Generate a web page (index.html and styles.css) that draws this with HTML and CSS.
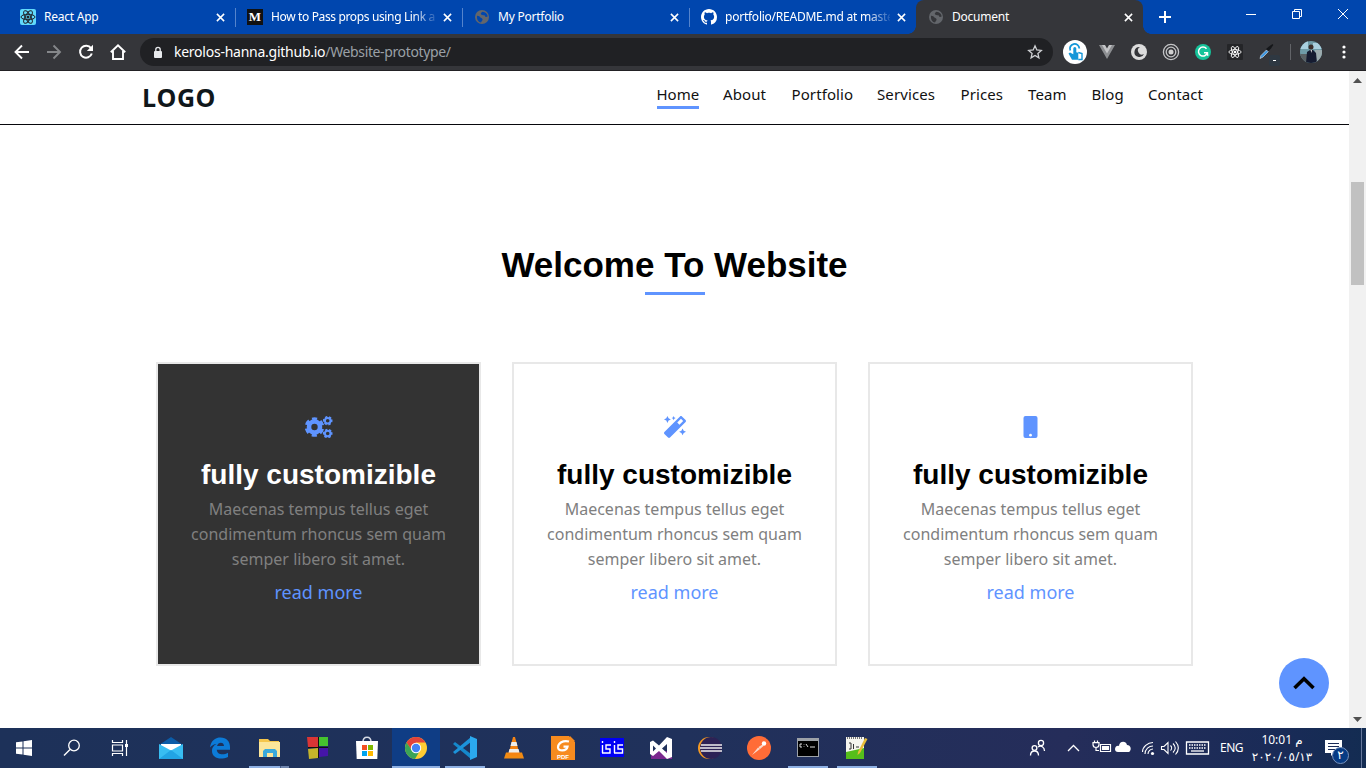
FILE: index.html
```html
<!DOCTYPE html>
<html lang="en">
<head>
<meta charset="utf-8">
<title>Document</title>
<link rel="stylesheet" href="styles.css">
</head>
<body>
<svg class="defs" width="0" height="0">
  <defs>
    <symbol id="close" viewBox="0 0 10 10"><path d="M1 1l8 8M9 1l-8 8" stroke="#fff" stroke-width="1.7"/></symbol>
    <symbol id="globe" viewBox="0 0 14 14"><circle cx="7" cy="7" r="7" fill="#63666b"/><path d="M2 5.500c1 1 2 0 3 1.500s2 .8 2.500 2-1 2.200-1.500 3.500C3.500 12.300 1.500 9.500 2 5.500zM7.500 1.800c-1.500 1-2.500 2-1 3s3-.3 3.500 1.200 1.500 1 2.700.6C12.500 4 10.500 2 7.500 1.800z" fill="var(--land)"/></symbol>
    <symbol id="atom" viewBox="0 0 16 16"><g fill="none" stroke="currentColor"><ellipse cx="8" cy="8" rx="7" ry="2.700"/><ellipse cx="8" cy="8" rx="7" ry="2.700" transform="rotate(60 8 8)"/><ellipse cx="8" cy="8" rx="7" ry="2.700" transform="rotate(120 8 8)"/></g><circle cx="8" cy="8" r="1.500" fill="currentColor"/></symbol>
  </defs>
</svg>
<div class="screen">
  <div class="tabs">
    <div class="tab"><svg class="fav react" viewBox="0 0 16 16"><rect width="16" height="16" rx="2" fill="#61dafb"/><use href="#atom"/></svg><span class="tab-title">React App</span><svg class="x"><use href="#close"/></svg></div>
    <div class="tab line"><span class="fav medium">M</span><span class="tab-title fade tight">How to Pass props using Link a</span><svg class="x"><use href="#close"/></svg></div>
    <div class="tab line"><svg class="fav globe"><use href="#globe"/></svg><span class="tab-title">My Portfolio</span><svg class="x"><use href="#close"/></svg></div>
    <div class="tab line"><svg class="fav" viewBox="0 0 16 16"><path fill="#fff" d="M8 0C3.580 0 0 3.580 0 8c0 3.540 2.290 6.530 5.470 7.590.4.070.55-.17.55-.38 0-.19-.01-.82-.01-1.490-2.010.37-2.530-.49-2.690-.94-.09-.23-.48-.94-.82-1.130-.28-.15-.68-.52-.01-.53.63-.01 1.080.58 1.230.82.72 1.210 1.870.87 2.330.66.07-.52.28-.87.51-1.070-1.780-.2-3.640-.89-3.640-3.950 0-.87.31-1.590.82-2.150-.08-.2-.36-1.020.08-2.120 0 0 .67-.21 2.200.82.64-.18 1.320-.27 2-.27.68 0 1.360.09 2 .27 1.530-1.040 2.200-.82 2.200-.82.44 1.100.16 1.920.08 2.120.51.56.82 1.270.82 2.150 0 3.070-1.870 3.750-3.650 3.950.29.25.54.73.54 1.480 0 1.070-.01 1.930-.01 2.200 0 .21.15.46.55.38A8.013 8.013 0 0016 8c0-4.420-3.580-8-8-8z"/></svg><span class="tab-title fade">portfolio/README.md at maste</span><svg class="x"><use href="#close"/></svg></div>
    <div class="tab active"><svg class="fav globe dark"><use href="#globe"/></svg><span class="tab-title">Document</span><svg class="x"><use href="#close"/></svg></div>
    <svg class="plus" viewBox="0 0 12 12"><path d="M6 0v12M0 6h12" stroke="#fff" stroke-width="2"/></svg>
    <div class="winctl">
      <svg viewBox="0 0 46 28"><path d="M18 14.500h10" stroke="#fff"/></svg>
      <svg viewBox="0 0 46 28"><path d="M18.500 11.500h7v7h-7zM20.500 11.500v-2h7v7h-2" stroke="#fff" fill="none"/></svg>
      <svg viewBox="0 0 46 28"><path d="M18 9l10 10M28 9l-10 10" stroke="#fff"/></svg>
    </div>
  </div>

  <div class="toolbar">
    <svg class="tool" viewBox="0 0 32 32"><path d="M23 16H9.500M16 9.500L9.500 16l6.500 6.500" fill="none" stroke="#fff" stroke-width="1.900"/></svg>
    <svg class="tool" viewBox="0 0 32 32"><path d="M9 16h13M15.500 9.500L22 16l-6.500 6.500" fill="none" stroke="#85878a" stroke-width="1.900"/></svg>
    <svg class="tool" viewBox="0 0 32 32"><path d="M21 12.200A6 6 0 1 0 21.800 17.500" fill="none" stroke="#fff" stroke-width="2"/><path d="M23 8.800v6.200h-6.200z" fill="#fff"/></svg>
    <svg class="tool" viewBox="0 0 32 32"><path d="M8.800 16.200L16 9.200l7.200 7M11 15v8h10v-8" fill="none" stroke="#fff" stroke-width="1.900"/></svg>
    <div class="omnibox">
      <svg class="lock" viewBox="0 0 10 12"><rect x="1" y="4.500" width="8" height="7" rx="1" fill="#e8eaed"/><path d="M2.800 5V3a2.200 2.200 0 0 1 4.400 0v2" fill="none" stroke="#e8eaed" stroke-width="1.300"/></svg>
      <span class="url"><b>kerolos-hanna.github.io</b>/Website-prototype/</span>
      <svg class="star" viewBox="0 0 16 16"><path d="M8 1.800l1.800 4.200 4.500.4-3.400 3 1 4.500L8 11.500l-3.900 2.400 1-4.500-3.400-3 4.500-.4z" fill="none" stroke="#cfd1d4" stroke-width="1.300"/></svg>
    </div>
    <svg class="tool" viewBox="0 0 32 32"><circle cx="16" cy="16" r="12" fill="#fff"/><path d="M11.300 14.500a4.700 4.700 0 1 1 9-2" fill="none" stroke="#1496d8" stroke-width="1.800"/><path d="M14.300 12.500a1.500 1.500 0 0 1 3 0v3.800l2 .4v7h-6.300l-3.500-6.200 1.500-1 3.300 1.700z" fill="#1496d8"/><path d="M19.300 16.500l3.700 1v6h-3.700" fill="none" stroke="#1496d8" stroke-width="1.400"/></svg>
    <svg class="tool" viewBox="0 0 32 32"><path d="M8 9h5l3 5 3-5h5l-8 14z" fill="#8c8e91"/><path d="M11 9h3l2 3.500L18 9h3l-5 8.500z" fill="#c4c5c7"/></svg>
    <svg class="tool" viewBox="0 0 32 32"><circle cx="16" cy="16" r="8" fill="#dcdcdc"/><path d="M17 11a5 5 0 1 0 4 7 3.500 3.500 0 1 1-4-7z" fill="#35363a"/></svg>
    <svg class="tool" viewBox="0 0 32 32"><g fill="none" stroke="#c4c5c7" stroke-width="1.300"><circle cx="16" cy="16" r="7.600"/><circle cx="16" cy="16" r="4.800"/></g><circle cx="16" cy="16" r="2.500" fill="#d0d0d0"/></svg>
    <svg class="tool" viewBox="0 0 32 32"><circle cx="16" cy="16" r="8" fill="#15c39a"/><path d="M19.500 12.800a4.500 4.500 0 1 0 .8 4H17m3.400 0l.3 3" fill="none" stroke="#fff" stroke-width="1.500"/></svg>
    <svg class="tool" viewBox="0 0 32 32"><rect x="8" y="8" width="16" height="16" rx="1" fill="#242528"/><use href="#atom" x="9" y="9" width="14" height="14" color="#fff"/></svg>
    <svg class="tool" viewBox="0 0 32 32"><path d="M9 22.500l1-3 5.500-5.500 1.700 1.700L12 21z" fill="#3b97e3" stroke="#ccd9e5" stroke-width=".7"/><path d="M15 13l3-2.500 3.500-2.500.8 1-2.300 3.500-2.500 2.500z" fill="#15171a"/><rect x="18" y="19" width="11" height="11" rx="2" fill="#2e3842"/><path d="M22 24.500h3" stroke="#fff"/></svg>
    <span class="sep"></span>
    <svg class="avatar" viewBox="0 0 22 22"><clipPath id="round"><circle cx="11" cy="11" r="11"/></clipPath><g clip-path="url(#round)"><path d="M0 0h22v22H0z" fill="#6f9ca8"/><path d="M0 0h8v8H0zM13 2h9v6h-9z" fill="#a9d0df"/><path d="M0 13h7v9H0z" fill="#596164"/><path d="M15 9h7v13h-7z" fill="#9cabae"/><path d="M6 22l1-11 3-2h3l3 3 1 10z" fill="#151b30"/><circle cx="11" cy="6" r="2.500" fill="#3b2e2b"/><path d="M10.500 9h1.500l-.5 3z" fill="#ddd"/></g></svg>
    <svg class="dots" viewBox="0 0 4 14"><g fill="#fff"><circle cx="2" cy="2" r="1.600"/><circle cx="2" cy="7" r="1.600"/><circle cx="2" cy="12" r="1.600"/></g></svg>
  </div>

  <div class="viewport">
    <div class="site">
      <header class="header">
        <div class="logo">LOGO</div>
        <nav class="nav"><a class="current">Home</a><a>About</a><a>Portfolio</a><a>Services</a><a>Prices</a><a>Team</a><a>Blog</a><a>Contact</a></nav>
      </header>
      <main class="main">
        <h1 class="title">Welcome To Website</h1>
        <div class="rule"></div>
        <div class="cards">
          <article class="card inverse">
            <svg class="icon cogs" viewBox="0 0 28 22"><g fill="none" stroke="#5f94ff"><circle cx="9.500" cy="11" r="5.500" stroke-width="4.600"/><circle cx="9.500" cy="11" r="8.300" stroke-width="2.900" stroke-dasharray="5 3.691" transform="rotate(-107 9.500 11)"/><g stroke-width="2"><circle cx="22.700" cy="4.700" r="2.800"/><circle cx="22.700" cy="17.500" r="2.800"/></g><g stroke-width="1.600" stroke-dasharray="2.500 1.688"><circle cx="22.700" cy="4.700" r="4" transform="rotate(-18 22.700 4.700)"/><circle cx="22.700" cy="17.500" r="4" transform="rotate(-18 22.700 17.500)"/></g></g></svg>
            <h2>fully customizible</h2>
            <p>Maecenas tempus tellus eget<br>condimentum rhoncus sem quam<br>semper libero sit amet.</p>
            <a>read more</a>
          </article>
          <article class="card">
            <svg class="icon wand" viewBox="0 0 512 512"><path fill="#5f94ff" d="M224 96l16-32 32-16-32-16-16-32-16 32-32 16 32 16 16 32zM80 160l26.660-53.330L160 80l-53.340-26.670L80 0 53.340 53.330 0 80l53.340 26.670L80 160zm352 128l-26.660 53.330L352 368l53.340 26.670L432 448l26.660-53.330L512 368l-53.340-26.670L432 288zm70.620-193.770L417.770 9.380C411.530 3.120 403.340 0 395.150 0c-8.190 0-16.380 3.120-22.630 9.380L9.380 372.520c-12.500 12.500-12.500 32.760 0 45.250l84.850 84.850c6.250 6.250 14.440 9.370 22.620 9.370 8.190 0 16.380-3.120 22.630-9.370l363.140-363.150c12.500-12.480 12.500-32.750 0-45.240zM359.450 203.460l-50.910-50.910 86.600-86.600 50.910 50.910-86.600 86.600z"/></svg>
            <h2>fully customizible</h2>
            <p>Maecenas tempus tellus eget<br>condimentum rhoncus sem quam<br>semper libero sit amet.</p>
            <a>read more</a>
          </article>
          <article class="card">
            <svg class="icon phone" viewBox="0 0 14 22"><rect width="14" height="22" rx="2" fill="#5f94ff"/><circle cx="7" cy="19.200" r="1.400" fill="#fff"/></svg>
            <h2>fully customizible</h2>
            <p>Maecenas tempus tellus eget<br>condimentum rhoncus sem quam<br>semper libero sit amet.</p>
            <a>read more</a>
          </article>
        </div>
      </main>
      <div class="to-top"><svg width="22" height="14" viewBox="0 0 22 14"><path d="M1.500 12L11 2.800l9.500 9.200" fill="none" stroke="#000" stroke-width="3.600"/></svg></div>
    </div>
    <div class="scrollbar"><svg width="9" height="5"><path d="M0 5l4.500-5L9 5z" fill="#505050"/></svg><div class="thumb"></div><svg width="9" height="5"><path d="M0 0l4.500 5L9 0z" fill="#505050"/></svg></div>
  </div>

  <div class="taskbar">
    <div class="system">
      <svg viewBox="0 0 48 40"><path d="M16 14.300l6.500-.9V19.500H16zM23.500 13.200L32 12v7.500h-8.500zM16 20.500h6.500v6.100l-6.500-.9zM23.500 20.500H32V28l-8.500-1.200z" fill="#fff"/></svg>
      <svg viewBox="0 0 48 40"><circle cx="26" cy="17.500" r="5.300" fill="none" stroke="#fff" stroke-width="1.300"/><path d="M22 21.500L16 27.500" stroke="#fff" stroke-width="1.400"/></svg>
      <svg viewBox="0 0 48 40"><path d="M16.500 12v2.500h10V12M16.500 28v-2.500h10V28M16.500 17h10v6h-10zM30.500 12v16" fill="none" stroke="#fff" stroke-width="1.200"/><path d="M29 16h3v3h-3z" fill="#fff"/></svg>
    </div>
    <div class="apps">
      <div class="app"><svg viewBox="0 0 24 24"><path d="M0 9l12-8 12 8z" fill="#0b5ca8"/><path d="M2 8h20v9H2z" fill="#fff"/><path d="M0 8l12 6.500L24 8v15H0z" fill="#38bdf2"/><path d="M0 23h24L12 14z" fill="#22a4e4"/></svg></div>
      <div class="app"><svg viewBox="0 0 24 24"><path d="M2 11.500C3 4 8 1.500 12.500 1.500c6 0 9.500 4 9.500 9.500v2.800H8.800c.2 5 6.500 5.700 11.200 3v4.200C12 24.500 4 22 4 15c0-4 2.500-6 4.500-7C6 8 4 9.500 2 11.500zM9 10h7c0-4.500-6-4.500-7 0z" fill="#0c7bd8" fill-rule="evenodd"/></svg></div>
      <div class="app open stack"><svg viewBox="0 0 24 24"><path d="M2 3h9l2 2h9v16H2z" fill="#f5c64b"/><path d="M2 6h21v15H2z" fill="#fce69a"/><path d="M6 21v-6l2-2h10l2 2v6h-4v-4h-6v4z" fill="#38a9dc"/></svg></div>
      <div class="app"><svg viewBox="0 0 24 24"><path d="M1 1l11 0v10H2z" fill="#d93535"/><path d="M13 1h9v9h-9z" fill="#45c32e"/><path d="M2 13l10-1v10l-9 1z" fill="#c5b42b"/><path d="M13 12l9-1v9l-9 1z" fill="#4515a8"/><path d="M12.500 1v21M2 11.500h20" stroke="#111"/></svg></div>
      <div class="app"><svg viewBox="0 0 24 24"><path d="M8 6c0-6.500 8-6.500 8 0" fill="none" stroke="#d7dbe5" stroke-width="1.500"/><path d="M1 5h22l-.7 18H1.700z" fill="#fff"/><path d="M7 9h5v5H7z" fill="#f25022"/><path d="M13 9h5v5h-5z" fill="#7fba00"/><path d="M7 15h5v5H7z" fill="#00a4ef"/><path d="M13 15h5v5h-5z" fill="#ffb900"/></svg></div>
      <div class="app open focused"><svg viewBox="0 0 24 24"><circle cx="12" cy="12" r="11" fill="#fc3"/><path d="M2.500 6.500A11 11 0 0 1 21.500 6.500H12L8 15z" fill="#e2433a"/><path d="M2.500 6.500A11 11 0 0 0 11 23l5-8.500H8z" fill="#3ba457"/><circle cx="12" cy="12" r="5.200" fill="#fff"/><circle cx="12" cy="12" r="4.200" fill="#4383f4"/></svg></div>
      <div class="app open"><svg viewBox="0 0 24 24"><path d="M0 8l2-2 16 12v5z" fill="#1588cb"/><path d="M0 16l2 2L18 6V1z" fill="#1c93da"/><path d="M17 0l7 3v18l-7 3z" fill="#2ba9ef"/></svg></div>
      <div class="app"><svg viewBox="0 0 24 24"><path d="M4 16.500h16l2 6H2z" fill="#f28b13"/><path d="M11 1h2l4.500 17c-2 2-9 2-11 0z" fill="#f58414"/><path d="M9.500 6h5l1 4h-7zM7.500 13h9l1 3.500h-11z" fill="#f0eeeb"/></svg></div>
      <div class="app"><svg viewBox="0 0 24 24"><path d="M0 0h18l6 6v18H0z" fill="#f78b1f"/><path d="M19 0v5h5z" fill="#f78b1f"/><path d="M18 5.500C12 4 7 7 7 11.500c0 4 8.500 4 9.500-.8h-4" fill="none" stroke="#fff" stroke-width="2.200"/><text x="12" y="22.500" class="pdf">PDF</text></svg></div>
      <div class="app"><svg viewBox="0 0 24 24"><path d="M0 2h24v19H0z" fill="#0000f5"/><path d="M2.500 9v8M11 9H6v4h4v4H2M14.500 9v8M23 9h-5v4h4.500v4H14M2.500 5v2M14.500 5v2" fill="none" stroke="#fff" stroke-width="1.400"/></svg></div>
      <div class="app"><svg viewBox="0 0 24 24"><path d="M2 15h21v8H2z" fill="#7a288f"/><path d="M1 6l3-1.500 6 5L18 1l5 2v18l-5 2-8-8-6 5-3-2zM4 9.500v6l3-3zM18 8l-5 4.500 5 4.500z" fill="#fff" fill-rule="evenodd"/></svg></div>
      <div class="app"><svg viewBox="0 0 24 24"><circle cx="11" cy="12" r="11" fill="#f59a23"/><circle cx="13" cy="12" r="11" fill="#2c2255"/><path d="M3 9h21M2 12h22M3 15h21" stroke="#eee" stroke-width="1.700"/></svg></div>
      <div class="app"><svg viewBox="0 0 24 24"><circle cx="12" cy="12" r="12" fill="#ff6c37"/><path d="M5 19l6-7.500 2 1.500zM11.500 11l4-2.500 1 1.500-3.500 3z" fill="#fbd8c9"/><circle cx="17" cy="7.500" r="2.200" fill="#fff"/></svg></div>
      <div class="app open"><svg viewBox="0 0 24 24"><path d="M1 2h22v19H1z" fill="#9da2a8"/><path d="M2 5h20v15H2z" fill="#000"/><path d="M6 8H4v3h2M8 8.500v.5M8 10.500v.5M10 8l2 3M14 11h5" fill="none" stroke="#ddd"/></svg></div>
      <div class="app open"><svg viewBox="0 0 24 24"><path d="M1 1h18v22H1z" fill="#f5f5ef"/><path d="M1 16l18-4v11H1z" fill="#56be1b"/><path d="M2 2h16" stroke="#777" stroke-width="2" stroke-dasharray="1 1"/><path d="M4 7h2v6H4M8.500 8v5M11 11h3" fill="none" stroke="#333"/><path d="M13 16L20 2l2.500 1L15 17l-2.500 2z" fill="#e8bd37"/></svg></div>
    </div>
    <svg class="tray" viewBox="0 0 190 40">
      <g fill="none" stroke="#fff" stroke-width="1.300">
        <circle cx="11.500" cy="20" r="2.400"/><path d="M7.500 27.500c0-6 8-6 8 0"/><circle cx="18" cy="15" r="2.600"/><path d="M15 19c3-2 6.500 0 6.500 4"/>
        <path d="M46 23l5.500-5.500L57 23" transform="translate(-1 0)"/>
        <path d="M77.500 16.500h10v7h-10z" stroke-width="1.200"/><path d="M71.500 12.500v2M74.500 12.500v2M70 14.700h6v1.800a3 3 0 0 1-6 0zM73 19.500v3h3" stroke-width="1.200"/>
        <path d="M119.500 24c0-5 5-9.500 10.500-9.500M122 26c0-5 4-8 8-8M125 26c0-3 2.500-5 5-5" stroke-width="1.100"/>
        <path d="M138.500 18.500h2.500l4-4v11l-4-4h-2.500zM147.500 17.500c1.500 1.500 1.500 3.500 0 5M150 15.500c3 3 3 6 0 9M152.500 13.500c3.500 4 3.500 9 0 13" stroke-width="1.100"/>
        <path d="M163.500 14h22v12h-22z"/><path d="M166 17h17M166 20h17" stroke-dasharray="1.500 1"/><path d="M168 23h13"/>
      </g>
      <path d="M79 18h7v4h-7z" fill="#fff"/><circle cx="129.500" cy="25.500" r="1.600" fill="#fff"/><path d="M92 21c0-3 3-4 4-3 0-5 7-6 8-1 4 0 5 5 2 7H95c-2 0-3-1-3-3z" fill="#fff"/>
    </svg>
    <span class="lang">ENG</span>
    <div class="clock"><span>10:01 م</span><span class="date">٢٠٢٠/٠٥/١٣</span></div>
    <div class="notes"><svg width="17" height="17" viewBox="0 0 17 17"><path d="M0 0h17v13H9l-3 3v-3H0z" fill="#fff"/><path d="M3 3.500h11M3 6.500h11M3 9.500h7" stroke="#1b2b57"/></svg><span class="badge">٢</span></div>
    <span class="desktop-edge"></span>
  </div>
</div>
</body>
</html>
```
FILE: styles.css
```css
* { box-sizing: border-box; }
body { margin: 0; font-family: "Noto Sans", sans-serif; }
svg { display: block; flex: none; }
.defs { position: absolute; }
.screen { width: 1366px; height: 768px; overflow: hidden; display: flex; flex-direction: column; }

.tabs { height: 34px; background: #0046ae; display: flex; padding-left: 8px; color: #fff; }
.tab { width: 227px; height: 34px; display: flex; align-items: center; padding: 0 10px 0 12px; font-size: 12px; flex: none; position: relative; }
.tab.line { background: linear-gradient(#5584cc, #5584cc) 0 8px / 1px 19px no-repeat; }
.tab.active { background: #35363a; border-radius: 8px 8px 0 0; }
.tab.active::before, .tab.active::after { content: ""; position: absolute; bottom: 0; width: 8px; height: 8px; }
.tab.active::before { left: -8px; background: radial-gradient(circle at 0 0, transparent 7.5px, #35363a 8px); }
.tab.active::after { right: -8px; background: radial-gradient(circle at 100% 0, transparent 7.5px, #35363a 8px); }
.fav { width: 16px; height: 16px; flex: none; }
.fav.react { color: #20232a; }
.fav.globe { width: 14px; height: 14px; margin: 0 1px; --land: #0046ae; }
.fav.dark { --land: #35363a; }
.medium { background: #111; font: bold 13px/16px "Liberation Serif", serif; text-align: center; }
.tab-title { margin-left: 8px; padding-bottom: 1px; width: 165px; white-space: nowrap; letter-spacing: -.24px; }
.tab-title.tight { letter-spacing: -.36px; }
.tab-title.fade { -webkit-mask-image: linear-gradient(90deg, #000 142px, transparent 168px); mask-image: linear-gradient(90deg, #000 142px, transparent 168px); }
.x { width: 9px; height: 9px; margin-left: 6.500px; }
.plus { width: 12px; height: 12px; margin: 11px 0 0 16px; }
.winctl { display: flex; margin-left: auto; }
.winctl svg { width: 46px; height: 28px; }

.toolbar { height: 37px; background: #35363a; border-bottom: 1px solid #222124; display: flex; align-items: center; padding-left: 6px; }
.tool { width: 32px; height: 32px; }
.omnibox { width: 913px; height: 28px; margin: 0 6px; border-radius: 14px; background: #202124; display: flex; align-items: center; padding: 0 10px 0 13px; }
.lock { width: 10px; height: 13px; }
.url { margin-left: 11px; padding-bottom: 1px; font-size: 14px; color: #9aa0a6; flex: 1; white-space: nowrap; letter-spacing: -.37px; }
.url b { font-weight: 400; color: #fff; letter-spacing: -.25px; }
.star { width: 16px; height: 16px; }
.sep { width: 1px; height: 16px; margin-left: 7px; background: #626468; }
.avatar { width: 22px; height: 22px; margin-left: 9px; }
.dots { width: 4px; height: 14px; margin-left: 20px; }

.viewport { height: 657px; display: flex; }
.site { width: 1349px; height: 657px; background: #fff; position: relative; }
.header { height: 54px; border-bottom: 1px solid #08080c; display: flex; justify-content: space-between; padding: 0 145px 0 142px; }
.logo { font-family: "Open Sans", "Noto Sans", sans-serif; font-weight: 700; font-size: 25px; line-height: 34px; padding-top: 9px; letter-spacing: .5px; color: #10171b; }
.nav { display: grid; grid-template-columns: 42px 44px 61px 59px 43px 39px 32px 56px; column-gap: 24.500px; padding-top: 12px; align-items: start; font-size: 15px; line-height: 22px; letter-spacing: .1px; color: #111; }
.nav a { white-space: nowrap; height: 26px; }
.nav .current { border-bottom: 3px solid #5f94ff; letter-spacing: 0; }
.main { padding-top: 119px; }
.title { margin: 0; text-align: center; font: bold 35px/42px "Liberation Sans", Arial, sans-serif; }
.rule { width: 60px; height: 3px; margin: 6px auto 67px; background: #5f94ff; }
.cards { display: flex; gap: 31px; padding-left: 156px; }
.card { width: 325px; height: 304px; border: 2px solid #e8e8e8; display: flex; flex-direction: column; align-items: center; text-align: center; padding-top: 52px; }
.card.inverse { background: #333; }
.icon { height: 22px; }
.cogs { width: 28px; }
.wand { width: 22px; }
.phone { width: 15px; }
.card h2 { margin: 20px 0 0; font: bold 28px/34px "Liberation Sans", Arial, sans-serif; white-space: nowrap; }
.inverse h2 { color: #fff; }
.card p { margin: 5px 0 0; font-size: 16px; line-height: 25px; color: #808080; white-space: nowrap; }
.card a { margin-top: 8px; font-size: 18px; line-height: 25px; color: #5f94ff; }
.to-top { position: absolute; left: 1279px; top: 587px; width: 50px; height: 50px; border-radius: 50%; background: #5f94ff; display: flex; align-items: center; justify-content: center; }
.scrollbar { width: 17px; background: #f1f1f1; display: flex; flex-direction: column; align-items: center; padding: 7px 0 6px; }
.thumb { width: 13px; height: 103px; margin: 99px 0 auto; background: #c1c1c1; }

.taskbar { height: 40px; background: linear-gradient(90deg, #1d3159, #20315b 50%, #252d5a 78%, #192b57 94%, #132c52); display: flex; color: #fff; }
.system { display: flex; margin-right: 3px; }
.system svg { width: 48px; height: 40px; }
.apps { display: flex; gap: 1px; }
.app { width: 48px; height: 40px; display: flex; align-items: center; justify-content: center; }
.app svg { width: 24px; height: 24px; }
.open { background: linear-gradient(#8eb0e3, #8eb0e3) 4px 38px / 40px 2px no-repeat; }
.stack { background: linear-gradient(90deg, #8eb0e3 31px, #465c89 31px, #465c89 32px, #7086af 32px) 4px 38px / 40px 2px no-repeat; }
.focused { background: linear-gradient(#8eb0e3, #8eb0e3) 0 38px / 48px 2px no-repeat #0f3d85; }
.pdf { font: bold 6px "Liberation Sans", sans-serif; fill: #fff; text-anchor: middle; }
.tray { width: 190px; height: 40px; margin-left: 142px; }
.lang { width: 25px; margin-left: 7px; font-size: 12px; line-height: 39px; letter-spacing: -.5px; }
.clock { width: 64px; margin-left: 5px; display: flex; flex-direction: column; align-items: center; font: 12px/17px "Noto Sans", "DejaVu Sans", sans-serif; padding-top: 3px; letter-spacing: -.3px; white-space: nowrap; }
.clock span { direction: ltr; unicode-bidi: bidi-override; }
.clock .date { letter-spacing: -1.1px; }
.notes { width: 24px; margin: 12px 0 0 11px; position: relative; }
.badge { position: absolute; left: 7px; top: 7px; width: 17px; height: 17px; border: 1px solid #7892bd; border-radius: 50%; background: #073b84; font: 12px/15px "DejaVu Sans", sans-serif; text-align: center; }
.desktop-edge { width: 1px; margin-left: auto; margin-right: 4px; background: #66779b; }
```
